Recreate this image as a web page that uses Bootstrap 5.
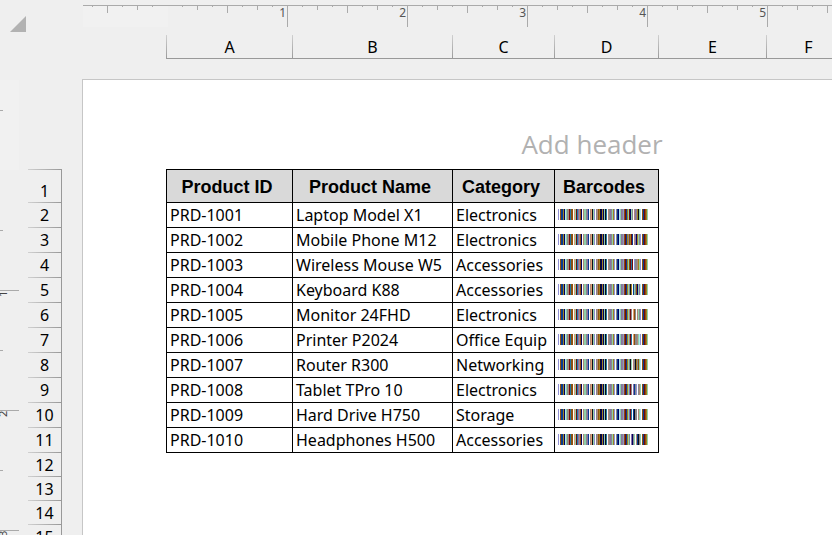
<!DOCTYPE html>
<html lang="en">
<head>
<meta charset="utf-8">
<meta name="viewport" content="width=device-width, initial-scale=1">
<title>Product barcodes</title>
<link href="https://cdn.jsdelivr.net/npm/bootstrap@5.3.0/dist/css/bootstrap.min.css" rel="stylesheet">
<style>
  body { background: #efefef; color: #000; font: 16px/24px "Noto Sans", "Open Sans", sans-serif; }
  .side { width: 82px; }
  .corner { height: 79px; padding: 10px 0 0 10px; }
  .select-all { width: 16px; height: 16px; line-height: 0; }
  .ruler-v { width: 28px; }
  .ruler-v svg { width: 19px; height: 100%; }
  .ruler-v-nums { top: 212px; left: -4px; width: 14px; }
  .ruler-v-nums span { height: 120px; writing-mode: vertical-rl; transform: rotate(180deg); font-size: 11px; line-height: 14px; text-align: right; color: #444; }
  .row-heads { width: 34px; margin-top: 90px; border-right: 1px solid #999; }
  .row-heads li { height: 25px; line-height: 24px; background: linear-gradient(90deg, #d0d0d0, #999) bottom / 100% 1px no-repeat; }
  .row-heads li.tall { height: 34px; padding-top: 10px; background: linear-gradient(90deg, #d0d0d0, #999) top / 100% 1px no-repeat, linear-gradient(90deg, #d0d0d0, #999) bottom / 100% 1px no-repeat; }
  .row-heads li.plain { height: 24px; }
  .ruler-h { height: 35px; padding: 5px 0 0 1px; }
  .ruler-h svg { width: 100%; height: 22px; }
  .ruler-nums { padding-left: 85px; top: 5px; left: 0; }
  .ruler-nums span { width: 120px; font-size: 12px; line-height: 16px; color: #555; padding-right: 1px; }
  .col-heads { height: 24px; margin-left: 84px; background: linear-gradient(#999, #999) bottom / 100% 1px no-repeat; }
  .col-heads span { padding-left: 1px; background: linear-gradient(#d0d0d0, #999) left / 1px 100% no-repeat; }
  .c-a { width: 126px; } .c-b { width: 160px; } .c-c { width: 102px; } .c-d { width: 104px; } .c-e { width: 108px; } .c-f { width: 84px; }
  .sheet { min-width: 1020px; margin-top: 20px; border: 1px solid #c6c6c6; border-bottom: 0; background: #fff; }
  .sheet-header { height: 89px; padding-bottom: 9px; }
  .sheet-header button { color: #b1b1b1; font-size: 26px; line-height: 32px; font-family: "Open Sans", "Noto Sans", sans-serif; }
  .grid-table { width: 493px; margin-left: 83px; table-layout: fixed; border-collapse: collapse; }
  .grid-table th, .grid-table td { border: 1px solid #000; padding: 0 3px; height: 25px; line-height: 24px; white-space: nowrap; vertical-align: middle; }
  .grid-table th { height: 33px; background: #d9d9d9; font: bold 18px/30px "Liberation Sans", Arial, sans-serif; text-align: center; padding: 2px 5px 0 0; }
  .bars { display: block; width: 90px; height: 12px; }
</style>
<script src="https://cdn.jsdelivr.net/npm/bootstrap@5.3.0/dist/js/bootstrap.bundle.min.js"></script>
</head>
<body class="d-flex vh-100 overflow-hidden">
<aside class="side d-flex flex-column flex-shrink-0 overflow-hidden">
  <div class="corner flex-shrink-0">
    <button type="button" class="select-all btn p-0 border-0 rounded-0" aria-label="Select all"><svg width="16" height="16" viewBox="0 0 16 16"><path d="M16 0V16H0Z" fill="#b2b2b2"/></svg></button>
  </div>
  <div class="d-flex flex-grow-1">
    <div class="ruler-v position-relative" aria-hidden="true">
      <svg class="d-block">
        <defs><pattern id="vt" width="19" height="120" y="31" patternUnits="userSpaceOnUse"><path d="M0 0.5H3" stroke="#aaa"/></pattern></defs>
        <rect y="1" width="19" height="90" fill="#f1f1f1"/>
        <rect width="3" height="100%" fill="url(#vt)"/>
        <path d="M0 211.5H19M0 331.5H19M0 451.5H19" stroke="#aaa"/>
      </svg>
      <div class="ruler-v-nums position-absolute d-flex flex-column"><span>1</span><span>2</span><span>3</span></div>
    </div>
    <ol class="row-heads list-unstyled mb-0 text-center">
      <li class="tall">1</li><li>2</li><li>3</li><li>4</li><li>5</li><li>6</li><li>7</li><li>8</li><li>9</li><li>10</li><li>11</li>
      <li class="plain">12</li><li class="plain">13</li><li class="plain">14</li><li class="plain">15</li>
    </ol>
  </div>
</aside>
<main class="d-flex flex-column flex-grow-1 overflow-hidden">
  <div class="ruler-h position-relative flex-shrink-0" aria-hidden="true">
    <svg class="d-block">
      <defs><pattern id="ht" width="120" height="22" x="84" patternUnits="userSpaceOnUse"><path d="M0.5 0V22M15.5 0V2M30.5 0V5M45.5 0V2M60.5 0V8M75.5 0V2M90.5 0V5M105.5 0V2" stroke="#aaa"/></pattern></defs>
      <rect width="100%" height="22" fill="url(#ht)"/>
      <rect width="85" height="22" fill="#f1f1f1"/>
      <path d="M9.5 0V2M24.5 0V8M39.5 0V2M54.5 0V5M69.5 0V2" stroke="#aaa"/>
      <rect width="100%" height="1" fill="#aaa"/>
    </svg>
    <div class="ruler-nums position-absolute d-flex text-end"><span class="flex-shrink-0">1</span><span class="flex-shrink-0">2</span><span class="flex-shrink-0">3</span><span class="flex-shrink-0">4</span><span class="flex-shrink-0">5</span></div>
  </div>
  <div class="col-heads d-flex flex-shrink-0 text-center">
    <span class="c-a flex-shrink-0">A</span><span class="c-b flex-shrink-0">B</span><span class="c-c flex-shrink-0">C</span><span class="c-d flex-shrink-0">D</span><span class="c-e flex-shrink-0">E</span><span class="c-f flex-shrink-0">F</span>
  </div>
  <section class="sheet flex-grow-1">
    <div class="sheet-header d-flex align-items-end justify-content-center"><button type="button" class="btn p-0 border-0">Add header</button></div>
    <table class="grid-table">
      <colgroup><col class="c-a"><col class="c-b"><col class="c-c"><col class="c-d"></colgroup>
      <thead><tr><th scope="col">Product ID</th><th scope="col">Product Name</th><th scope="col">Category</th><th scope="col">Barcodes</th></tr></thead>
      <tbody>
        <tr><td>PRD-1001</td><td>Laptop Model X1</td><td>Electronics</td><td data-tail="nrbegrvgywtmyekglw"></td></tr>
        <tr><td>PRD-1002</td><td>Mobile Phone M12</td><td>Electronics</td><td data-tail="nrbeynerbwtmvegypw"></td></tr>
        <tr><td>PRD-1003</td><td>Wireless Mouse W5</td><td>Accessories</td><td data-tail="nrbegnrcrwpyytegpw"></td></tr>
        <tr><td>PRD-1004</td><td>Keyboard K88</td><td>Accessories</td><td data-tail="nrbegykewbgynvgmlw"></td></tr>
        <tr><td>PRD-1005</td><td>Monitor 24FHD</td><td>Electronics</td><td data-tail="nrbegtrywonywtgypw"></td></tr>
        <tr><td>PRD-1006</td><td>Printer P2024</td><td>Office Equip</td><td data-tail="nrbegtrcwonyytglpw"></td></tr>
        <tr><td>PRD-1007</td><td>Router R300</td><td>Networking</td><td data-tail="nrbegykgwtykeynglw"></td></tr>
        <tr><td>PRD-1008</td><td>Tablet TPro 10</td><td>Electronics</td><td data-tail="nrbegmrywmbypwytgw"></td></tr>
        <tr><td>PRD-1009</td><td>Hard Drive H750</td><td>Storage</td><td data-tail="nrbegmrcwbkyywtglw"></td></tr>
        <tr><td>PRD-1010</td><td>Headphones H500</td><td>Accessories</td><td data-tail="nrbegywmvygwtbkygw"></td></tr>
      </tbody>
    </table>
  </section>
</main>
<script>
  // Each letter is one bar of the code; all products share the leading bars.
  const inks = { p: '#9090d4', t: '#b08878', b: '#083c90', n: '#8c5010', v: '#000060', g: '#8fd0a8', r: '#700a10', k: '#0c0c18', m: '#8870a8', c: '#2078a0', o: '#e0a070', l: '#b0e8f0', y: '#88888c', e: '#a08020' };
  const lead = 'pwnbbevlgytrcnnw' + 'ogrcmtnvw' + 'tggymbw' + 'tokgpw' + 'ytnekvevgkc' + 'wtymygepw' + 'ybvlgmyp';
  document.querySelectorAll('td[data-tail]').forEach(cell => {
    const code = lead + cell.dataset.tail + 'nbrneg';
    const bars = [...code].map((k, i) => inks[k] ? `<rect x="${i}" width="1" height="11" fill="${inks[k]}"/>` : '').join('');
    cell.innerHTML = `<svg class="bars" viewBox="0 0 90 12" shape-rendering="crispEdges" role="img" aria-label="Barcode">${bars}</svg>`;
  });
</script>
</body>
</html>
